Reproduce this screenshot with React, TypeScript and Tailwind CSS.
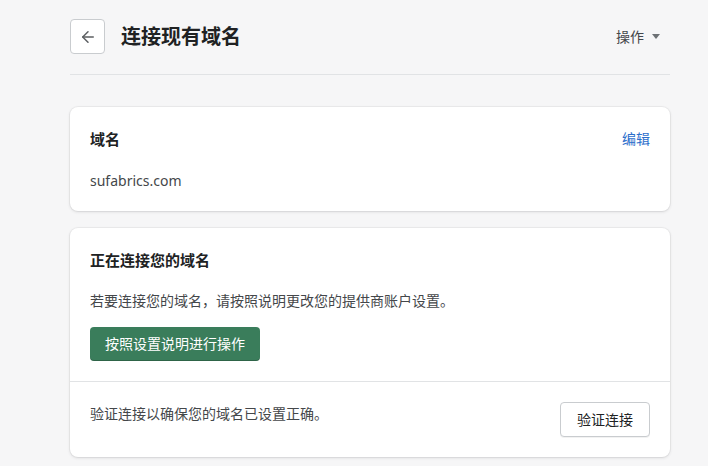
import { ArrowLeft } from "lucide-react";

const FONT = { fontFamily: '"Noto Sans", "Noto Sans CJK SC", sans-serif' };

export default function App() {
  return (
    <main style={FONT} className="min-h-[466px] w-full bg-[#f6f6f7] pl-[70px] text-[#202223]">
      <div className="w-[600px] pt-[19px]">
        <header className="flex items-center justify-between border-b border-[#e1e3e5] pb-5">
          <div className="flex items-center gap-4">
            <button
              type="button"
              className="flex h-[35px] w-[35px] items-center justify-center rounded border border-[#c9cccf] bg-white text-[#5c5f62]"
            >
              <ArrowLeft size={18} strokeWidth={2} />
            </button>
            <h1 className="text-[20px] font-semibold leading-7">连接现有域名</h1>
          </div>
          <button type="button" className="flex items-center gap-2 pr-[10px] text-sm text-[#44474a]">
            操作
            <svg width="8" height="5" viewBox="0 0 8 5" className="text-[#6d7175]">
              <path d="M0 0h8L4 5z" fill="currentColor" />
            </svg>
          </button>
        </header>

        <section className="mt-8 rounded-lg bg-white p-5 shadow-[0_0_0_1px_rgba(63,63,68,0.05),0_1px_3px_rgba(63,63,68,0.15)]">
          <div className="flex items-start justify-between">
            <h2 className="text-[15px] font-semibold leading-6">域名</h2>
            <a className="text-sm leading-6 text-[#2c6ecb]">编辑</a>
          </div>
          <p className="mt-5 text-sm leading-5 text-[#44474a]">sufabrics.com</p>
        </section>

        <section className="mt-[17px] rounded-lg bg-white shadow-[0_0_0_1px_rgba(63,63,68,0.05),0_1px_3px_rgba(63,63,68,0.15)]">
          <div className="p-5">
            <h2 className="text-[15px] font-semibold leading-6">正在连接您的域名</h2>
            <p className="mt-[19px] text-sm leading-5 text-[#44474a]">
              若要连接您的域名，请按照说明更改您的提供商账户设置。
            </p>
            <button
              type="button"
              className="mt-4 h-[34px] rounded bg-[#3a7d5b] px-[15px] text-sm text-white shadow-[inset_0_-1px_0_rgba(0,0,0,0.2)]"
            >
              按照设置说明进行操作
            </button>
          </div>
          <div className="flex items-start justify-between border-t border-[#e1e3e5] px-5 pb-5 pt-5">
            <p className="text-sm leading-6 text-[#44474a]">验证连接以确保您的域名已设置正确。</p>
            <button
              type="button"
              className="h-[35px] rounded border border-[#c9cccf] bg-white px-4 text-sm text-[#202223] shadow-[0_1px_0_rgba(0,0,0,0.05)]"
            >
              验证连接
            </button>
          </div>
        </section>
      </div>
    </main>
  );
}
